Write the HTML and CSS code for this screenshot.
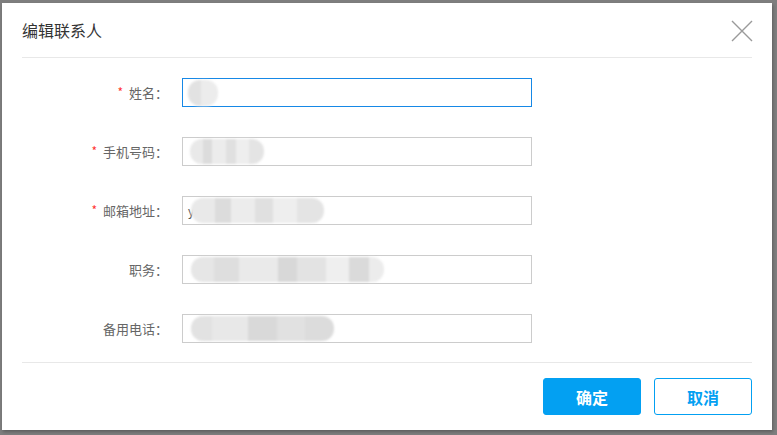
FILE: index.html
```html
<!DOCTYPE html>
<html lang="zh">
<head>
<meta charset="utf-8">
<title>编辑联系人</title>
<link rel="stylesheet" href="styles.css">
</head>
<body>
<div class="backdrop">
  <div class="modal">
    <div class="modal-header">
      <span class="modal-title">编辑联系人</span>
      <button class="close" aria-label="关闭">
        <svg width="22" height="22" viewBox="0 0 22 22"><path d="M1 1L21 21M21 1L1 21" stroke="#9a9a9a" stroke-width="1.4" fill="none"/></svg>
      </button>
    </div>
    <div class="modal-body">
      <div class="row">
        <label class="label"><span class="req">*</span>姓名：</label>
        <div class="input focused"><span class="blur b-name"></span></div>
      </div>
      <div class="row">
        <label class="label"><span class="req">*</span>手机号码：</label>
        <div class="input"><span class="blur b-phone"></span></div>
      </div>
      <div class="row">
        <label class="label"><span class="req">*</span>邮箱地址：</label>
        <div class="input"><span class="pre">y</span><span class="blur b-mail"></span></div>
      </div>
      <div class="row">
        <label class="label">职务：</label>
        <div class="input"><span class="blur b-job"></span></div>
      </div>
      <div class="row">
        <label class="label">备用电话：</label>
        <div class="input"><span class="blur b-alt"></span></div>
      </div>
    </div>
    <div class="modal-footer">
      <button class="btn primary">确定</button>
      <button class="btn ghost">取消</button>
    </div>
  </div>
</div>
</body>
</html>
```
FILE: styles.css
```css
html, body {
  margin: 0;
  padding: 0;
  background: #7e7e7e;
  font-family: "Noto Sans CJK SC", "Liberation Sans", sans-serif;
}
.backdrop {
  width: 777px;
  height: 435px;
  box-sizing: border-box;
  padding: 3px 5px 5px 2px;
  display: flex;
}
.modal {
  flex: 1;
  background: #fff;
  display: flex;
  flex-direction: column;
  padding: 0 20px 0 20px;
  box-shadow: 1px 2px 3px rgba(0,0,0,0.25);
}
.modal-header {
  height: 54px;
  border-bottom: 1px solid #e8e8e8;
  display: flex;
  align-items: center;
  justify-content: space-between;
}
.modal-title {
  font-size: 16px;
  color: #333;
}
.close {
  border: 0;
  background: none;
  padding: 0;
  width: 22px;
  height: 22px;
  margin-right: -1px;
  margin-top: 2px;
  display: flex;
  cursor: pointer;
}
.modal-body {
  display: flex;
  flex-direction: column;
  gap: 30px;
  padding: 20px 0 19px;
  border-bottom: 1px solid #e8e8e8;
}
.row {
  display: flex;
  align-items: center;
  height: 29px;
}
.label {
  width: 146px;
  text-align: right;
  font-size: 13px;
  color: #666;
  margin-right: 14px;
  flex: none;
}
.req {
  color: #f33;
  font-size: 12px;
  margin-right: 6px;
  position: relative;
  top: -1px;
}
.input {
  width: 350px;
  height: 29px;
  box-sizing: border-box;
  border: 1px solid #ccc;
  display: flex;
  align-items: center;
  padding-left: 5px;
  font-size: 12px;
  color: #777;
}
.input.focused {
  border-color: #1688e6;
}
.pre {
  color: #555;
  line-height: 1;
}
.blur {
  display: block;
  height: 25px;
  border-radius: 12px;
  filter: blur(0.8px);
  background:
    linear-gradient(90deg, #e9e9e9 0 18%, #dcdcdc 18% 30%, #ececec 30% 48%, #e0e0e0 48% 62%, #eeeeee 62% 80%, #e4e4e4 80% 100%);
}
.b-name { width: 30px; background: linear-gradient(90deg, #e2e2e2 0 45%, #ececec 45% 100%); height: 26px; }
.b-phone { width: 74px; margin-left: 2px; }
.b-mail { width: 133px; margin-left: -3px; }
.b-job { width: 193px; margin-left: 3px; background: linear-gradient(90deg, #e6e6e6 0 12%, #dedede 12% 25%, #eaeaea 25% 45%, #d8d8d8 45% 55%, #e3e3e3 55% 70%, #efefef 70% 82%, #dadada 82% 92%, #ececec 92%); }
.b-alt { width: 143px; margin-left: 3px; background: linear-gradient(90deg, #e2e2e2 0 15%, #e8e8e8 15% 40%, #d9d9d9 40% 60%, #e1e1e1 60% 80%, #dcdcdc 80% 100%); }
.modal-footer {
  display: flex;
  justify-content: flex-end;
  gap: 13px;
  padding-top: 15px;
}
.btn {
  width: 98px;
  height: 37px;
  border-radius: 3px;
  font-family: "Noto Sans CJK SC", sans-serif;
  font-size: 16px;
  font-weight: bold;
  cursor: pointer;
}
.btn.primary {
  background: #03a0f2;
  border: 1px solid #03a0f2;
  color: #fff;
}
.btn.ghost {
  background: #fff;
  border: 1px solid #03a0f2;
  color: #03a0f2;
}
```
